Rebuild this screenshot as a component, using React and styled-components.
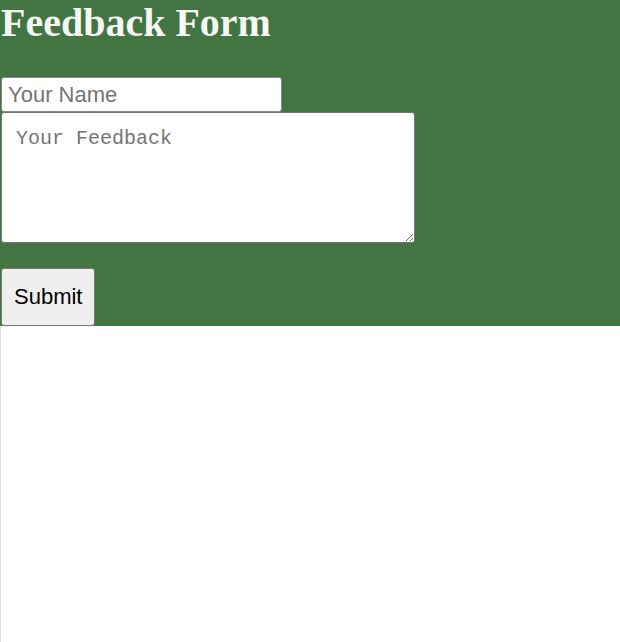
import React from "react";
import styled, { createGlobalStyle } from "styled-components";

const GlobalStyle = createGlobalStyle`
  body {
    margin: 0;
    background: #fff;
  }
`;

const Page = styled.div`
  min-height: 100vh;
  border-left: 1px solid #dcdcdc;
  box-sizing: border-box;
`;

const Section = styled.section`
  background-color: #437543;
  display: flex;
  flex-direction: column;
  align-items: flex-start;
  margin-left: -1px;
`;

const Title = styled.h1`
  font-family: "Liberation Serif", "Times New Roman", serif;
  font-size: 40px;
  line-height: 46px;
  color: #f4f7f4;
  margin: 0 0 31px 1px;
`;

const Form = styled.form`
  display: flex;
  flex-direction: column;
  align-items: flex-start;
  padding-left: 1px;
`;

const NameInput = styled.input`
  box-sizing: border-box;
  width: 281px;
  height: 35px;
  padding: 4px 6px;
  font-family: "Liberation Sans", Arial, sans-serif;
  font-size: 22px;
  border: 1px solid #8a8a8a;
  border-radius: 3px;
  background: #fff;
  margin: 0;

  &::placeholder {
    color: #757575;
  }
`;

const FeedbackArea = styled.textarea`
  box-sizing: border-box;
  width: 414px;
  height: 131px;
  padding: 14px;
  font-family: "Liberation Mono", "Courier New", monospace;
  font-size: 20px;
  border: 1px solid #767676;
  border-radius: 3px;
  background: #fff;
  margin: 0;
  resize: both;

  &::placeholder {
    color: #757575;
  }
`;

const SubmitButton = styled.button`
  box-sizing: border-box;
  margin-top: 25px;
  height: 58px;
  padding: 0 12px;
  font-family: "Liberation Sans", Arial, sans-serif;
  font-size: 22px;
  color: #000;
  background: #efefef;
  border: 1px solid #767676;
  border-radius: 3px;
`;

export default function App() {
  return (
    <>
      <GlobalStyle />
      <Page>
        <Section>
          <Title>Feedback Form</Title>
          <Form onSubmit={(e) => e.preventDefault()}>
            <NameInput type="text" placeholder="Your Name" />
            <FeedbackArea placeholder="Your Feedback" />
            <SubmitButton type="submit">Submit</SubmitButton>
          </Form>
        </Section>
      </Page>
    </>
  );
}
